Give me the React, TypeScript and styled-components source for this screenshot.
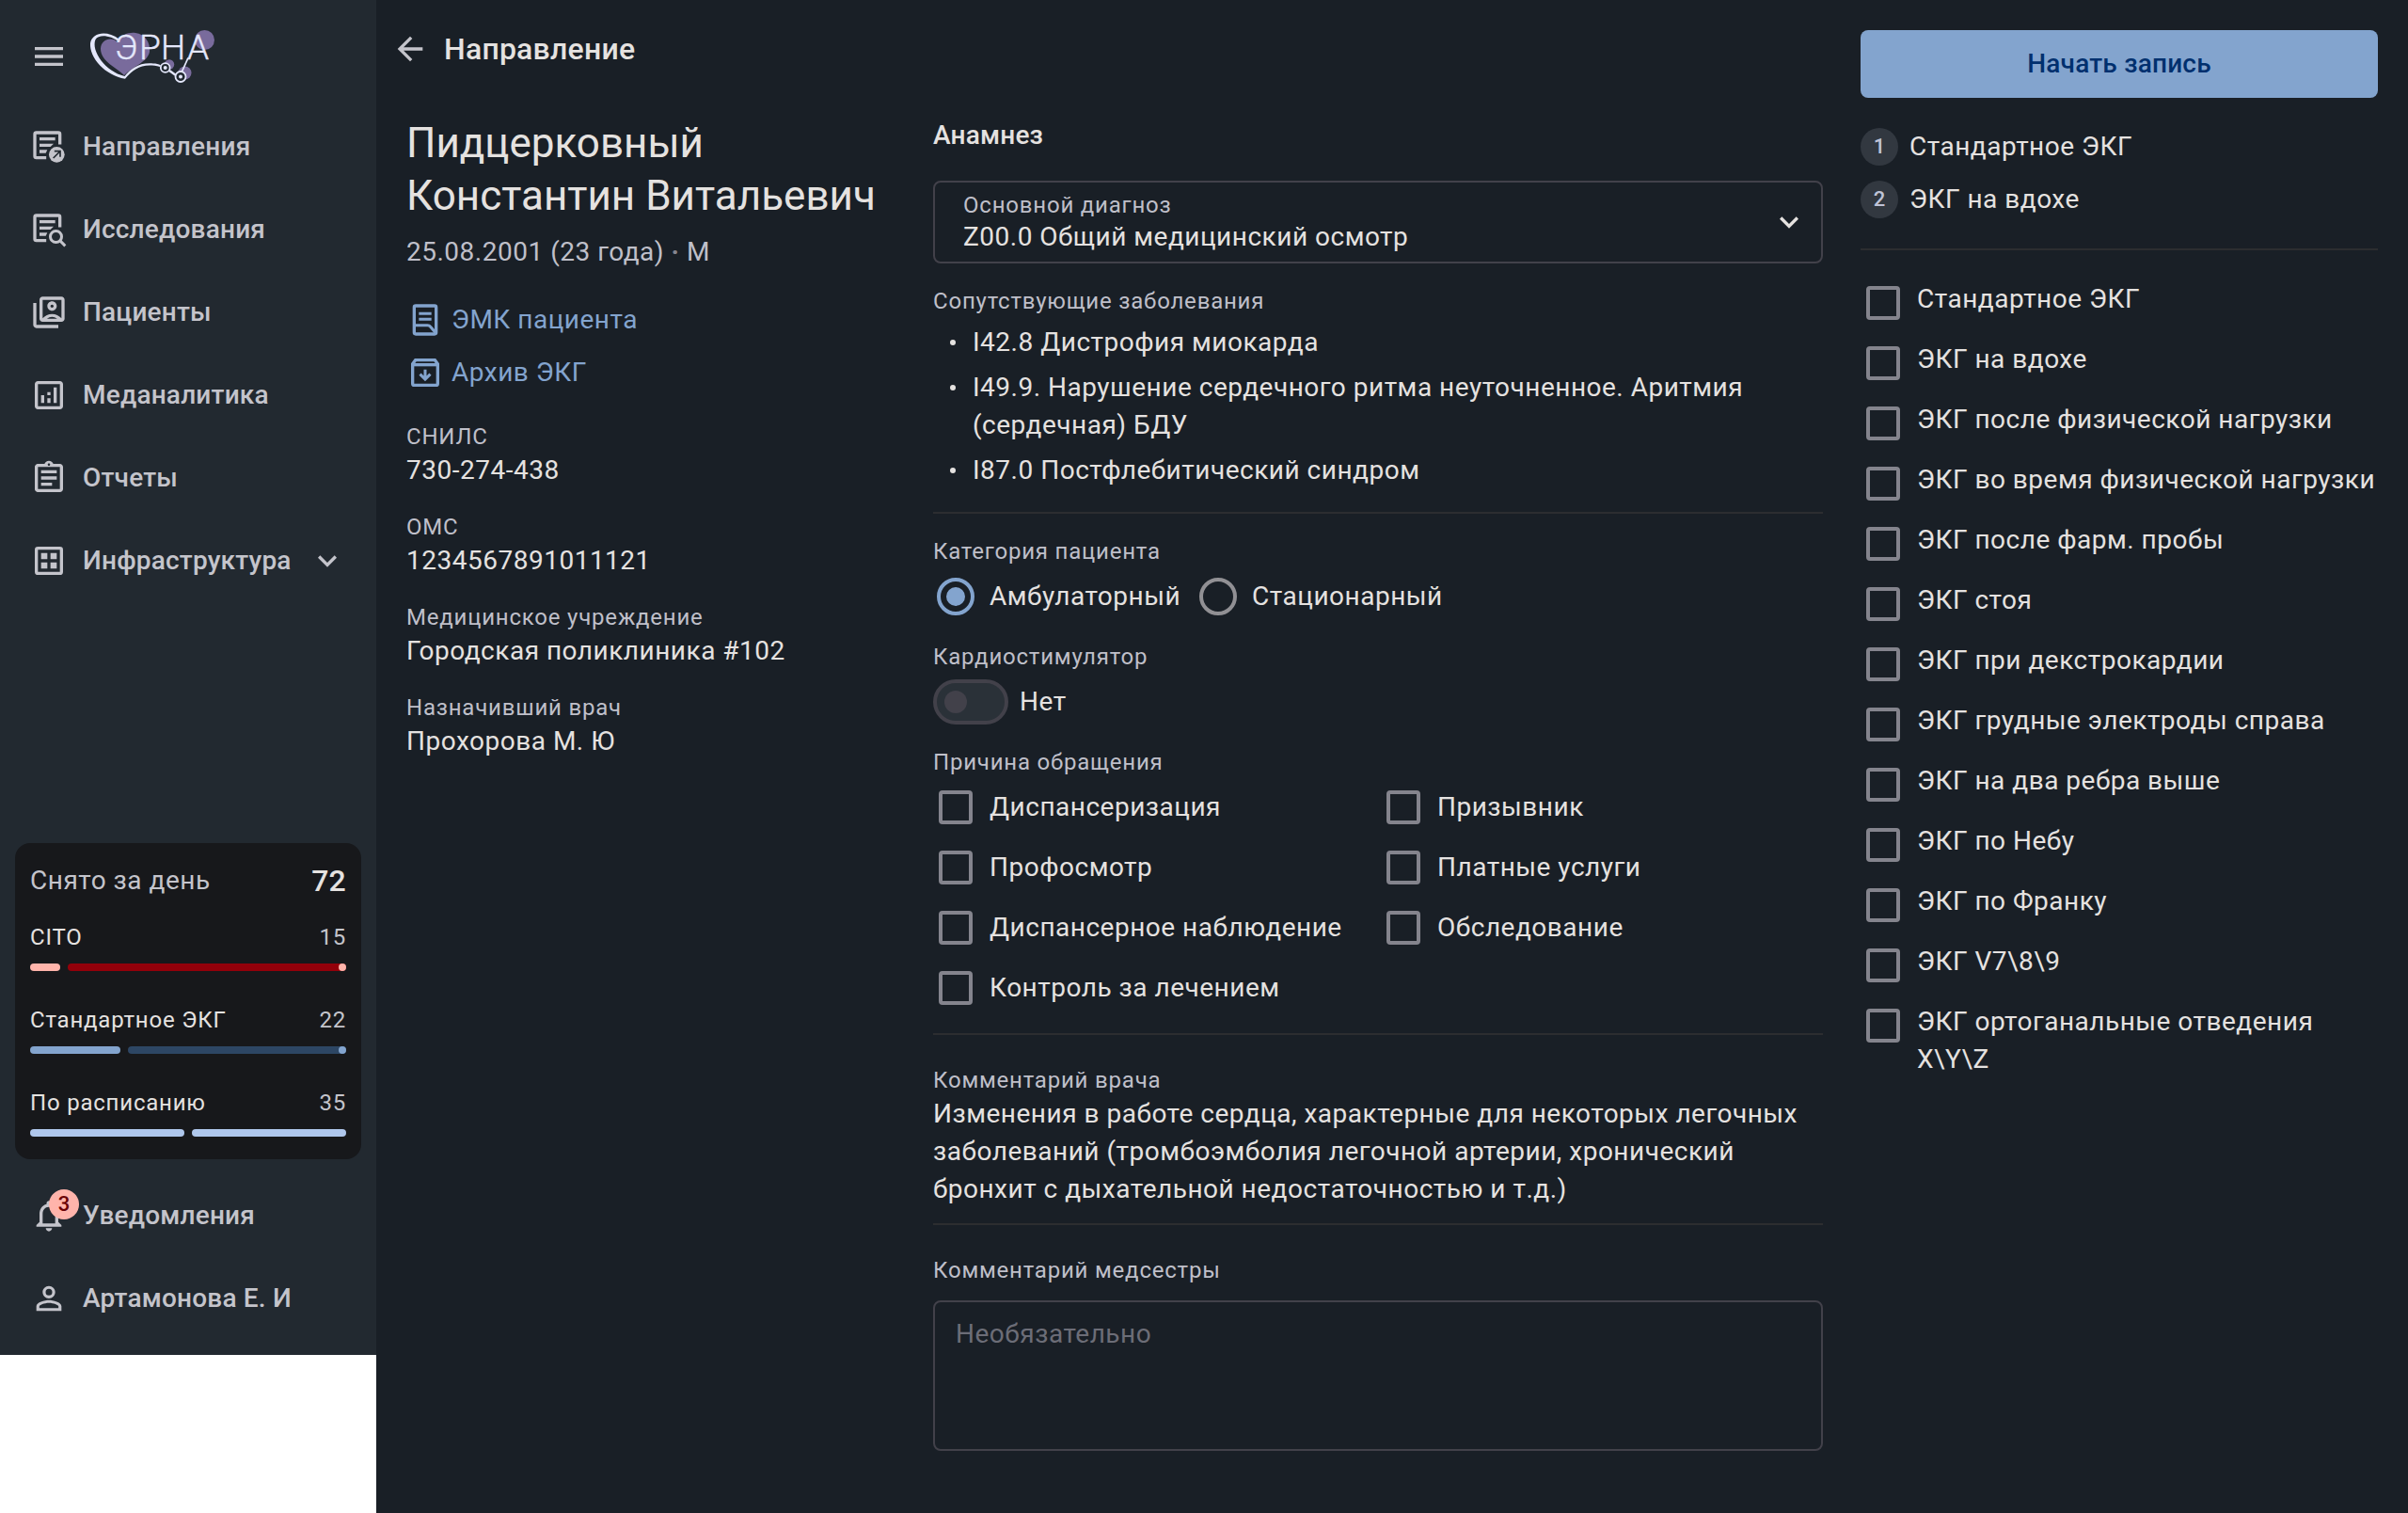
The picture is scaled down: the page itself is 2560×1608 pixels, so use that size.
import React from "react";
import styled, { createGlobalStyle, css } from "styled-components";
import {
  MdArrowBack,
  MdExpandMore,
  MdMenu,
  MdNotificationsNone,
  MdOutlineAnalytics,
  MdOutlineAssignment,
  MdOutlineSwitchAccount,
  MdPersonOutline,
} from "react-icons/md";

const color = {
  page: "#191f26",
  sidebar: "#222930",
  card: "#17181b",
  text: "#e5e2e0",
  muted: "#c4c4cb",
  label: "#bfbfc9",
  primary: "#83a4ce",
  onPrimary: "#00306e",
  outline: "#42414a",
  control: "#84848d",
  divider: "#2c2d30",
};

/* Tracking of the Material type scale: body, caption and label styles. */
const tracking = {
  body: "0.018em",
  caption: "0.033em",
  label: "0.007em",
};

const GlobalStyle = createGlobalStyle`
  *, *::before, *::after { box-sizing: border-box; }
  html, body { margin: 0; background: #fff; }
  body {
    font-family: Roboto, "Noto Sans", sans-serif;
    font-size: 28px;
    line-height: 40px;
    letter-spacing: ${tracking.body};
    color: ${color.text};
  }
  h1, h2, h3, p, ul, ol, dl, dd, fieldset { margin: 0; padding: 0; border: 0; }
  ul, ol { list-style: none; }
  button, input, select, textarea {
    margin: 0; padding: 0; border: 0; background: none; color: inherit;
    font: inherit; letter-spacing: inherit;
  }
  svg { display: block; flex: none; }
`;

const Shell = styled.div`
  display: flex;
  align-items: flex-start;
`;

/* ---------- sidebar ---------- */

const Sidebar = styled.aside`
  flex: none;
  display: flex;
  flex-direction: column;
  width: 400px;
  min-height: 1440px;
  padding: 32px 16px 16px;
  background: ${color.sidebar};
  color: ${color.muted};
`;

const Brand = styled.div`
  display: flex;
  align-items: center;
  gap: 24px;
  padding: 0 16px 24px;
`;

const IconButton = styled.button`
  display: flex;
  color: ${color.muted};
  cursor: pointer;
`;

const NavLink = styled.a`
  display: flex;
  align-items: center;
  gap: 16px;
  height: 88px;
  padding: 0 16px;
  color: inherit;
  font-weight: 500;
  letter-spacing: ${tracking.label};
  text-decoration: none;
`;

const NavText = styled.span`
  flex: 1;
`;

const IconSlot = styled.span`
  position: relative;
  display: flex;
`;

const Badge = styled.span`
  position: absolute;
  top: -8px;
  left: 20px;
  width: 32px;
  height: 32px;
  border-radius: 50%;
  background: #ffb4ab;
  color: #690005;
  font-size: 22px;
  line-height: 32px;
  text-align: center;
`;

const DayCard = styled.section`
  margin-top: auto;
  margin-bottom: 16px;
  padding: 16px 16px 24px;
  border-radius: 16px;
  background: ${color.card};
`;

const Split = styled.div`
  display: flex;
  align-items: center;
  justify-content: space-between;
`;

const DayTotal = styled(Split)`
  height: 48px;
  margin-bottom: 16px;
`;

const Total = styled.strong`
  color: ${color.text};
  font-size: 32px;
  font-weight: 500;
  letter-spacing: ${tracking.label};
`;

const Stats = styled.ul`
  display: grid;
  gap: 32px;
  font-size: 24px;
  letter-spacing: ${tracking.caption};
`;

const StatName = styled.span`
  color: ${color.text};
`;

const Bar = styled.div`
  display: flex;
  gap: 8px;
  height: 8px;
  margin-top: 8px;
`;

const Segment = styled.span<{ $share: number; $fill: string; $dot?: string }>`
  flex: ${(p) => p.$share} 1 0;
  display: flex;
  justify-content: flex-end;
  border-radius: 4px;
  background: ${(p) => p.$fill};
  ${(p) =>
    p.$dot &&
    css`
      &::after {
        content: "";
        width: 8px;
        height: 8px;
        border-radius: 50%;
        background: ${p.$dot};
      }
    `}
`;

/* ---------- main area ---------- */

const Main = styled.main`
  flex: 1;
  min-width: 0;
  min-height: 100vh;
  display: grid;
  grid-template-columns: minmax(0, 1fr) 550px;
  column-gap: 40px;
  align-items: start;
  padding: 32px 32px 66px 16px;
  background: ${color.page};
`;

const TopBar = styled.header`
  display: flex;
  align-items: center;
  gap: 16px;
  margin-bottom: 52px;
`;

const PageTitle = styled.h1`
  font-size: 32px;
  font-weight: 500;
  letter-spacing: ${tracking.label};
`;

const Columns = styled.div`
  display: grid;
  grid-template-columns: 520px minmax(0, 1fr);
  column-gap: 40px;
  align-items: start;
  padding-left: 16px;
`;

const PatientName = styled.h2`
  margin-bottom: 12px;
  font-size: 44px;
  font-weight: 400;
  line-height: 56px;
  letter-spacing: normal;
`;

const PatientMeta = styled.p`
  color: ${color.label};
`;

const Dot = styled.span`
  color: #85858f;
  font-weight: 700;
`;

const PatientLinks = styled.nav`
  display: grid;
  justify-items: start;
  gap: 16px;
  margin: 32px 0;
`;

const PatientLink = styled.a`
  display: flex;
  gap: 8px;
  color: ${color.primary};
  text-decoration: none;
`;

const Facts = styled.dl`
  display: grid;
  gap: 24px;
`;

const caption = css`
  display: block;
  color: ${color.label};
  font-size: 24px;
  line-height: 32px;
  letter-spacing: ${tracking.caption};
`;

const FactName = styled.dt`
  ${caption}
`;

const SectionTitle = styled.h2`
  margin-bottom: 28px;
  font-size: 28px;
  font-weight: 500;
  letter-spacing: ${tracking.label};
`;

const SelectBox = styled.div`
  display: grid;
  grid-template-columns: minmax(0, 1fr) auto;
  align-items: center;
  margin-bottom: 24px;
  padding: 8px 14px 8px 30px;
  border: 2px solid ${color.outline};
  border-radius: 8px;

  svg {
    grid-column: 2;
    grid-row: 1 / span 2;
    color: ${color.text};
    pointer-events: none;
  }
`;

const Caption = styled.label`
  ${caption}
`;

const CaptionText = styled.h3`
  ${caption}
  font-weight: 400;
`;

const Legend = styled.legend`
  ${caption}
  padding: 0;
  margin-bottom: 8px;
`;

const Select = styled.select`
  appearance: none;
  width: 100%;
  height: 36px;
  line-height: 36px;
  outline: none;
`;

const BulletList = styled.ul`
  display: grid;
  gap: 8px;
  margin-top: 8px;
`;

const Bullet = styled.li`
  display: flex;

  &::before {
    content: "";
    flex: none;
    width: 6px;
    height: 6px;
    margin: 17px 18px;
    border-radius: 50%;
    background: ${color.text};
  }
`;

const Divider = styled.hr<{ $before?: number; $after?: number }>`
  height: 2px;
  margin: ${(p) => p.$before ?? 24}px 0 ${(p) => p.$after ?? 24}px;
  border: 0;
  background: ${color.divider};
`;

const Groups = styled.div`
  display: grid;
  gap: 24px;
`;

const RadioRow = styled.div`
  display: flex;
  gap: 16px;
`;

const CheckGrid = styled.div`
  display: grid;
  grid-template-columns: 1fr 1fr;
  gap: 16px 6px;
`;

const CheckColumn = styled.div`
  display: grid;
  gap: 16px;
`;

const Choice = styled.label<{ $top?: boolean }>`
  display: flex;
  align-items: ${(p) => (p.$top ? "flex-start" : "center")};
  gap: 12px;
  min-height: 48px;
  cursor: pointer;
`;

const Checkbox = styled.input.attrs({ type: "checkbox" })`
  appearance: none;
  flex: none;
  width: 36px;
  height: 36px;
  margin: 6px;
  border: 4px solid ${color.control};
  border-radius: 4px;

  &:checked {
    border-color: ${color.primary};
    background: ${color.primary};
  }
`;

const Radio = styled.input.attrs({ type: "radio" })`
  appearance: none;
  flex: none;
  display: grid;
  place-items: center;
  width: 40px;
  height: 40px;
  margin: 4px;
  border: 4px solid #919094;
  border-radius: 50%;

  &:checked {
    border-color: ${color.primary};
  }

  &:checked::before {
    content: "";
    width: 20px;
    height: 20px;
    border-radius: 50%;
    background: ${color.primary};
  }
`;

const Switch = styled.input.attrs({ type: "checkbox", role: "switch" })`
  appearance: none;
  flex: none;
  display: flex;
  align-items: center;
  width: 80px;
  height: 48px;
  padding: 0 8px;
  border: 4px solid ${color.outline};
  border-radius: 24px;
  background: #2a3138;

  &::before {
    content: "";
    width: 24px;
    height: 24px;
    border-radius: 50%;
    background: ${color.outline};
  }

  &:checked {
    justify-content: flex-end;
    border-color: ${color.primary};
  }
`;

const NoteBox = styled.textarea`
  display: block;
  width: 100%;
  height: 160px;
  margin-top: 16px;
  padding: 14px 22px;
  border: 2px solid ${color.outline};
  border-radius: 8px;
  outline: none;
  resize: none;

  &::placeholder {
    color: #6c6d77;
    opacity: 1;
  }
`;

/* ---------- recording panel ---------- */

const PrimaryButton = styled.button`
  display: block;
  width: 100%;
  height: 72px;
  border-radius: 8px;
  background: ${color.primary};
  color: ${color.onPrimary};
  font-weight: 500;
  letter-spacing: ${tracking.label};
  cursor: pointer;
`;

const Steps = styled.ol`
  display: grid;
  gap: 16px;
  margin-top: 32px;
`;

const Step = styled.li`
  display: flex;
  gap: 12px;
`;

const StepNumber = styled.span`
  width: 40px;
  height: 40px;
  border-radius: 50%;
  background: #323840;
  color: #bfc3d6;
  font-size: 22px;
  font-weight: 500;
  letter-spacing: normal;
  text-align: center;
`;

/* ---------- drawings ---------- */

const LogoDrawing = styled.svg`
  overflow: visible;
`;

const Logo = () => (
  <LogoDrawing width="132" height="56" viewBox="96 32 132 56" role="img" aria-label="ЭРНА" fill="none">
    <g fill="#796b9c">
      <path d="M132 80C124 72 107 65 107 52C107 42 119 38 125 45C128 37 137 34 144 35C154 36 160 45 159 55C157 66 142 70 132 80Z" />
      <circle cx="217.500" cy="42.500" r="10.500" />
      <circle cx="180" cy="68.500" r="5.200" />
      <circle cx="196.500" cy="77.500" r="7" />
    </g>
    <path
      d="M126 44.500C118 37.500 105 36 101.500 42C96.500 54 112 76 132.500 81C139 73 148 66 163 67.500C166 67.500 168.500 68 171 69.500L170 71C152 66.500 142 73 133 83.800C112 80 95 62 96 46C98 34 114 32 126.500 41.500Z"
      fill="#e4e7fb"
    />
    <g stroke="#e4e7fb" strokeWidth="1.800">
      <circle cx="175.700" cy="72" r="4.900" fill="#222930" />
      <path d="M180 75L187 80" strokeWidth="2.400" />
      <circle cx="192" cy="81.500" r="5.500" fill="#222930" />
      <path d="M193.500 76L200 61.500" />
    </g>
    <g fill="#e4e7fb">
      <circle cx="175.700" cy="72" r="2" />
      <circle cx="192" cy="81.500" r="2" />
      <text
        x="122 148 171 199"
        y="62.500"
        fontFamily="Roboto"
        fontWeight="300"
        fontSize="37"
        letterSpacing="0"
        stroke="#e4e7fb"
        strokeWidth="0.400"
      >
        ЭРНА
      </text>
    </g>
  </LogoDrawing>
);

const SheetOutline = () => (
  <>
    <path d="M19 10.500V4a1 1 0 0 0-1-1H4a1 1 0 0 0-1 1v14a1 1 0 0 0 1 1h6.300" stroke="currentColor" strokeWidth="2" />
    <path d="M6 6h10v2H6zM6 10h9l-2 2H6zM6 14h5l-1 2H6z" fill="currentColor" />
  </>
);

const ReferralIcon = () => (
  <svg width="40" height="40" viewBox="0 0 24 24" fill="none" aria-hidden="true">
    <SheetOutline />
    <circle cx="17" cy="17" r="5" fill="currentColor" />
    <path d="M14.800 19.200L19 15M15.500 14.800h3.700v3.700" stroke={color.sidebar} strokeWidth="1" />
  </svg>
);

const StudyIcon = () => (
  <svg width="40" height="40" viewBox="0 0 24 24" fill="none" aria-hidden="true">
    <SheetOutline />
    <circle cx="16.500" cy="16.500" r="3.600" stroke="currentColor" strokeWidth="1.800" />
    <path d="M19 19l3.400 3.400" stroke="currentColor" strokeWidth="1.800" />
  </svg>
);

const BuildingIcon = () => (
  <svg width="40" height="40" viewBox="0 0 24 24" fill="none" aria-hidden="true">
    <rect x="4" y="4" width="16" height="16" rx="1" stroke="currentColor" strokeWidth="2" />
    <path d="M7 7h4v4H7zM13 7h4v4h-4zM7 13h4v4H7zM13 13h4v4h-4z" fill="currentColor" />
  </svg>
);

const RecordIcon = () => (
  <svg width="40" height="40" viewBox="0 0 24 24" fill="none" aria-hidden="true">
    <rect x="5" y="3" width="14" height="18" rx="1" stroke="currentColor" strokeWidth="2" />
    <path d="M8 8h8M8 11.500h8" stroke="currentColor" strokeWidth="1.800" />
    <path d="M5 15.500h8.500q1.200 0 2 1L19 20.500" stroke="currentColor" strokeWidth="1.800" />
  </svg>
);

const ArchiveIcon = () => (
  <svg width="40" height="40" viewBox="0 0 24 24" fill="none" aria-hidden="true">
    <path d="M4 6.500L5.800 4h12.400L20 6.500V19a1 1 0 0 1-1 1H5a1 1 0 0 1-1-1z" stroke="currentColor" strokeWidth="2" />
    <path d="M4 7h16" stroke="currentColor" strokeWidth="2" />
    <path d="M12 10v6M8.700 13l3.300 3.300L15.300 13" stroke="currentColor" strokeWidth="1.800" />
  </svg>
);

/* ---------- data ---------- */

const navItems = [
  { text: "Направления", icon: <ReferralIcon /> },
  { text: "Исследования", icon: <StudyIcon /> },
  { text: "Пациенты", icon: <MdOutlineSwitchAccount size={40} /> },
  { text: "Меданалитика", icon: <MdOutlineAnalytics size={40} /> },
  { text: "Отчеты", icon: <MdOutlineAssignment size={40} /> },
  { text: "Инфраструктура", icon: <BuildingIcon />, expandable: true },
];

const stats = [
  { name: "CITO", value: 15, done: 32, left: 296, fill: "#ffb4ab", rest: "#93000a", dot: "#ffb4ab" },
  { name: "Стандартное ЭКГ", value: 22, done: 96, left: 232, fill: "#83a4ce", rest: "#2d4664", dot: "#83a4ce" },
  { name: "По расписанию", value: 35, done: 1, left: 1, fill: "#afc7ec", rest: "#afc7ec" },
];

const facts = [
  ["СНИЛС", "730-274-438"],
  ["ОМС", "1234567891011121"],
  ["Медицинское учреждение", "Городская поликлиника #102"],
  ["Назначивший врач", "Прохорова М. Ю"],
];

const comorbidities = [
  "I42.8 Дистрофия миокарда",
  "I49.9. Нарушение сердечного ритма неуточненное. Аритмия (сердечная) БДУ",
  "I87.0 Постфлебитический синдром",
];

const reasons = [
  "Диспансеризация",
  "Призывник",
  "Профосмотр",
  "Платные услуги",
  "Диспансерное наблюдение",
  "Обследование",
  "Контроль за лечением",
];

const steps = ["Стандартное ЭКГ", "ЭКГ на вдохе"];

const recordings = [
  "Стандартное ЭКГ",
  "ЭКГ на вдохе",
  "ЭКГ после физической нагрузки",
  "ЭКГ во время физической нагрузки",
  "ЭКГ после фарм. пробы",
  "ЭКГ стоя",
  "ЭКГ при декстрокардии",
  "ЭКГ грудные электроды справа",
  "ЭКГ на два ребра выше",
  "ЭКГ по Небу",
  "ЭКГ по Франку",
  "ЭКГ V7\\8\\9",
  "ЭКГ ортоганальные отведения X\\Y\\Z",
];

export default function App() {
  return (
    <>
      <GlobalStyle />
      <Shell>
        <Sidebar>
          <Brand>
            <IconButton type="button" aria-label="Меню">
              <MdMenu size={40} />
            </IconButton>
            <Logo />
          </Brand>
          <nav>
            {navItems.map((item) => (
              <NavLink href="#" key={item.text}>
                {item.icon}
                <NavText>{item.text}</NavText>
                {item.expandable && <MdExpandMore size={40} />}
              </NavLink>
            ))}
          </nav>
          <DayCard>
            <DayTotal>
              <span>Снято за день</span>
              <Total>72</Total>
            </DayTotal>
            <Stats>
              {stats.map((s) => (
                <li key={s.name}>
                  <Split>
                    <StatName>{s.name}</StatName>
                    <span>{s.value}</span>
                  </Split>
                  <Bar>
                    <Segment $share={s.done} $fill={s.fill} />
                    <Segment $share={s.left} $fill={s.rest} $dot={s.dot} />
                  </Bar>
                </li>
              ))}
            </Stats>
          </DayCard>
          <NavLink href="#">
            <IconSlot>
              <MdNotificationsNone size={40} />
              <Badge>3</Badge>
            </IconSlot>
            <NavText>Уведомления</NavText>
          </NavLink>
          <NavLink href="#">
            <MdPersonOutline size={40} />
            <NavText>Артамонова Е. И</NavText>
          </NavLink>
        </Sidebar>

        <Main>
          <div>
            <TopBar>
              <IconButton type="button" aria-label="Назад">
                <MdArrowBack size={40} />
              </IconButton>
              <PageTitle>Направление</PageTitle>
            </TopBar>
            <Columns>
              <section>
                <PatientName>Пидцерковный Константин Витальевич</PatientName>
                <PatientMeta>
                  25.08.2001 (23 года) <Dot>·</Dot> М
                </PatientMeta>
                <PatientLinks>
                  <PatientLink href="#">
                    <RecordIcon />
                    ЭМК пациента
                  </PatientLink>
                  <PatientLink href="#">
                    <ArchiveIcon />
                    Архив ЭКГ
                  </PatientLink>
                </PatientLinks>
                <Facts>
                  {facts.map(([name, value]) => (
                    <div key={name}>
                      <FactName>{name}</FactName>
                      <dd>{value}</dd>
                    </div>
                  ))}
                </Facts>
              </section>

              <section>
                <SectionTitle>Анамнез</SectionTitle>
                <SelectBox>
                  <Caption htmlFor="diagnosis">Основной диагноз</Caption>
                  <Select id="diagnosis" defaultValue="z00">
                    <option value="z00">Z00.0 Общий медицинский осмотр</option>
                  </Select>
                  <MdExpandMore size={40} />
                </SelectBox>
                <CaptionText>Сопутствующие заболевания</CaptionText>
                <BulletList>
                  {comorbidities.map((c) => (
                    <Bullet key={c}>{c}</Bullet>
                  ))}
                </BulletList>
                <Divider />
                <Groups>
                  <fieldset>
                    <Legend>Категория пациента</Legend>
                    <RadioRow>
                      <Choice>
                        <Radio name="category" defaultChecked />
                        Амбулаторный
                      </Choice>
                      <Choice>
                        <Radio name="category" />
                        Стационарный
                      </Choice>
                    </RadioRow>
                  </fieldset>
                  <fieldset>
                    <Legend>Кардиостимулятор</Legend>
                    <Choice>
                      <Switch />
                      Нет
                    </Choice>
                  </fieldset>
                  <fieldset>
                    <Legend>Причина обращения</Legend>
                    <CheckGrid>
                      {reasons.map((r) => (
                        <Choice key={r}>
                          <Checkbox />
                          {r}
                        </Choice>
                      ))}
                    </CheckGrid>
                  </fieldset>
                </Groups>
                <Divider $after={32} />
                <CaptionText>Комментарий врача</CaptionText>
                <p>
                  Изменения в работе сердца, характерные для некоторых легочных заболеваний (тромбоэмболия
                  легочной артерии, хронический бронхит с дыхательной недостаточностью и т.д.)
                </p>
                <Divider $before={16} $after={32} />
                <Caption htmlFor="nurse-note">Комментарий медсестры</Caption>
                <NoteBox id="nurse-note" placeholder="Необязательно" />
              </section>
            </Columns>
          </div>

          <aside>
            <PrimaryButton type="button">Начать запись</PrimaryButton>
            <Steps>
              {steps.map((s, i) => (
                <Step key={s}>
                  <StepNumber>{i + 1}</StepNumber>
                  {s}
                </Step>
              ))}
            </Steps>
            <Divider $before={32} $after={32} />
            <CheckColumn>
              {recordings.map((r) => (
                <Choice key={r} $top>
                  <Checkbox />
                  {r}
                </Choice>
              ))}
            </CheckColumn>
          </aside>
        </Main>
      </Shell>
    </>
  );
}
